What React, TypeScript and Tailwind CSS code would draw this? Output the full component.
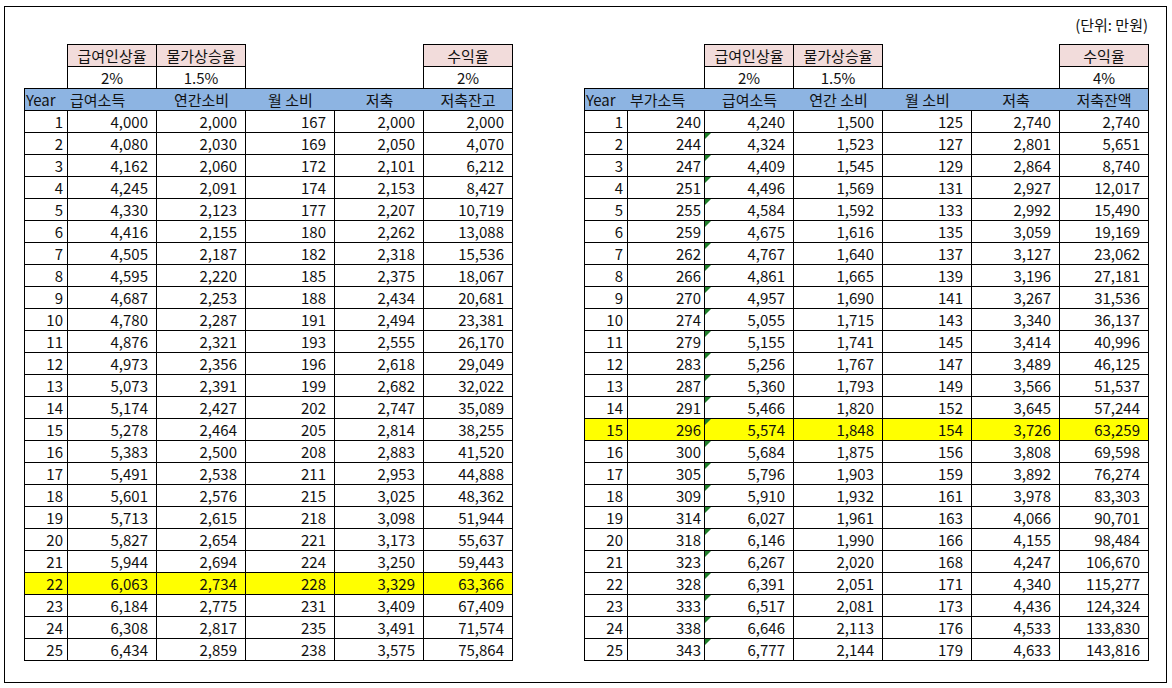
import React from "react";

type Row = (string | number)[];

const leftRows: Row[] = [
  [1, "4,000", "2,000", "167", "2,000", "2,000"],
  [2, "4,080", "2,030", "169", "2,050", "4,070"],
  [3, "4,162", "2,060", "172", "2,101", "6,212"],
  [4, "4,245", "2,091", "174", "2,153", "8,427"],
  [5, "4,330", "2,123", "177", "2,207", "10,719"],
  [6, "4,416", "2,155", "180", "2,262", "13,088"],
  [7, "4,505", "2,187", "182", "2,318", "15,536"],
  [8, "4,595", "2,220", "185", "2,375", "18,067"],
  [9, "4,687", "2,253", "188", "2,434", "20,681"],
  [10, "4,780", "2,287", "191", "2,494", "23,381"],
  [11, "4,876", "2,321", "193", "2,555", "26,170"],
  [12, "4,973", "2,356", "196", "2,618", "29,049"],
  [13, "5,073", "2,391", "199", "2,682", "32,022"],
  [14, "5,174", "2,427", "202", "2,747", "35,089"],
  [15, "5,278", "2,464", "205", "2,814", "38,255"],
  [16, "5,383", "2,500", "208", "2,883", "41,520"],
  [17, "5,491", "2,538", "211", "2,953", "44,888"],
  [18, "5,601", "2,576", "215", "3,025", "48,362"],
  [19, "5,713", "2,615", "218", "3,098", "51,944"],
  [20, "5,827", "2,654", "221", "3,173", "55,637"],
  [21, "5,944", "2,694", "224", "3,250", "59,443"],
  [22, "6,063", "2,734", "228", "3,329", "63,366"],
  [23, "6,184", "2,775", "231", "3,409", "67,409"],
  [24, "6,308", "2,817", "235", "3,491", "71,574"],
  [25, "6,434", "2,859", "238", "3,575", "75,864"],
];

const rightRows: Row[] = [
  [1, "240", "4,240", "1,500", "125", "2,740", "2,740"],
  [2, "244", "4,324", "1,523", "127", "2,801", "5,651"],
  [3, "247", "4,409", "1,545", "129", "2,864", "8,740"],
  [4, "251", "4,496", "1,569", "131", "2,927", "12,017"],
  [5, "255", "4,584", "1,592", "133", "2,992", "15,490"],
  [6, "259", "4,675", "1,616", "135", "3,059", "19,169"],
  [7, "262", "4,767", "1,640", "137", "3,127", "23,062"],
  [8, "266", "4,861", "1,665", "139", "3,196", "27,181"],
  [9, "270", "4,957", "1,690", "141", "3,267", "31,536"],
  [10, "274", "5,055", "1,715", "143", "3,340", "36,137"],
  [11, "279", "5,155", "1,741", "145", "3,414", "40,996"],
  [12, "283", "5,256", "1,767", "147", "3,489", "46,125"],
  [13, "287", "5,360", "1,793", "149", "3,566", "51,537"],
  [14, "291", "5,466", "1,820", "152", "3,645", "57,244"],
  [15, "296", "5,574", "1,848", "154", "3,726", "63,259"],
  [16, "300", "5,684", "1,875", "156", "3,808", "69,598"],
  [17, "305", "5,796", "1,903", "159", "3,892", "76,274"],
  [18, "309", "5,910", "1,932", "161", "3,978", "83,303"],
  [19, "314", "6,027", "1,961", "163", "4,066", "90,701"],
  [20, "318", "6,146", "1,990", "166", "4,155", "98,484"],
  [21, "323", "6,267", "2,020", "168", "4,247", "106,670"],
  [22, "328", "6,391", "2,051", "171", "4,340", "115,277"],
  [23, "333", "6,517", "2,081", "173", "4,436", "124,324"],
  [24, "338", "6,646", "2,113", "176", "4,533", "133,830"],
  [25, "343", "6,777", "2,144", "179", "4,633", "143,816"],
];

type SheetProps = {
  widths: string[];
  pads: string[];
  pink: number[];
  pinkLabels: Record<number, string>;
  rates: Record<number, string>;
  headers: { text: string; align: string }[];
  rows: Row[];
  highlight: number;
  triangleCol?: number;
};

function Triangle() {
  return (
    <svg className="absolute left-0 top-0" width="6" height="6" viewBox="0 0 6 6">
      <polygon points="0,0 6,0 0,6" fill="#1f7f2a" />
    </svg>
  );
}

function Sheet({ widths, pads, pink, pinkLabels, rates, headers, rows, highlight, triangleCol }: SheetProps) {
  const last = widths.length - 1;
  return (
    <div className="flex flex-col shrink-0">
      <div className="flex h-[23px]">
        {widths.map((w, i) => {
          let cls = "";
          if (pink.includes(i)) cls = "bg-[#f2dcdb] border-t border-b border-r border-black text-center";
          else if (pink.includes(i + 1)) cls = "border-r border-black";
          return (
            <div key={i} className={`${w} shrink-0 h-full whitespace-nowrap ${cls}`}>
              {pinkLabels[i] ?? ""}
            </div>
          );
        })}
      </div>
      <div className="flex h-[21px]">
        {widths.map((w, i) => {
          let cls = "";
          if (pink.includes(i)) cls = "border-r border-black text-center";
          else if (pink.includes(i + 1)) cls = "border-r border-black";
          return (
            <div key={i} className={`${w} shrink-0 h-full ${cls}`}>
              {rates[i] ?? ""}
            </div>
          );
        })}
      </div>
      <div className="flex h-[23px] bg-[#8db4e2] border-t border-b border-black">
        {headers.map((h, i) => (
          <div
            key={i}
            className={`${widths[i]} shrink-0 h-full whitespace-nowrap ${h.align} ${i === 0 ? "border-l border-black" : ""} ${
              i === last ? "border-r border-black" : ""
            }`}
          >
            {h.text}
          </div>
        ))}
      </div>
      {rows.map((r, ri) => (
        <div key={ri} className={`flex h-[22px] ${r[0] === highlight ? "bg-[#ffff00]" : ""}`}>
          {r.map((v, i) => (
            <div
              key={i}
              className={`${widths[i]} ${pads[i]} relative shrink-0 h-full text-right border-b border-r border-black ${
                i === 0 ? "border-l" : ""
              }`}
            >
              {triangleCol === i && ri > 0 ? <Triangle /> : null}
              {v}
            </div>
          ))}
        </div>
      ))}
    </div>
  );
}

export default function App() {
  return (
    <div className="w-[1172px] h-[688px] bg-white overflow-hidden pt-[6px] pl-[4px] text-[#111111] text-[15px] leading-[21px] font-['Noto_Sans_CJK_KR','Malgun_Gothic',sans-serif]">
      <div className="w-[1163px] h-[677px] border border-black flex flex-col">
        <div className="h-[37px] flex justify-end pr-[18px] pt-[7px] leading-[22px]">(단위: 만원)</div>
        <div className="flex items-start pl-[19px] gap-[71px]">
          <Sheet
            widths={["w-[44px]", "w-[89px]", "w-[89px]", "w-[89px]", "w-[89px]", "w-[89px]"]}
            pads={["pr-[4px]", "pr-[8px]", "pr-[8px]", "pr-[8px]", "pr-[8px]", "pr-[8px]"]}
            pink={[1, 2, 5]}
            pinkLabels={{ 1: "급여인상율", 2: "물가상승율", 5: "수익율" }}
            rates={{ 1: "2%", 2: "1.5%", 5: "2%" }}
            headers={[
              { text: "Year", align: "text-left pl-[1px]" },
              { text: "급여소득", align: "text-left pl-[2px]" },
              { text: "연간소비", align: "text-center" },
              { text: "월 소비", align: "text-center" },
              { text: "저축", align: "text-center" },
              { text: "저축잔고", align: "text-center" },
            ]}
            rows={leftRows}
            highlight={22}
          />
          <Sheet
            widths={["w-[44px]", "w-[77px]", "w-[89px]", "w-[89px]", "w-[89px]", "w-[88px]", "w-[89px]"]}
            pads={["pr-[4px]", "pr-[3px]", "pr-[8px]", "pr-[8px]", "pr-[8px]", "pr-[8px]", "pr-[8px]"]}
            pink={[2, 3, 6]}
            pinkLabels={{ 2: "급여인상율", 3: "물가상승율", 6: "수익율" }}
            rates={{ 2: "2%", 3: "1.5%", 6: "4%" }}
            headers={[
              { text: "Year", align: "text-left pl-[1px]" },
              { text: "부가소득", align: "text-left pl-[2px]" },
              { text: "급여소득", align: "text-center" },
              { text: "연간 소비", align: "text-center" },
              { text: "월 소비", align: "text-center" },
              { text: "저축", align: "text-center" },
              { text: "저축잔액", align: "text-center" },
            ]}
            rows={rightRows}
            highlight={15}
            triangleCol={2}
          />
        </div>
      </div>
    </div>
  );
}
